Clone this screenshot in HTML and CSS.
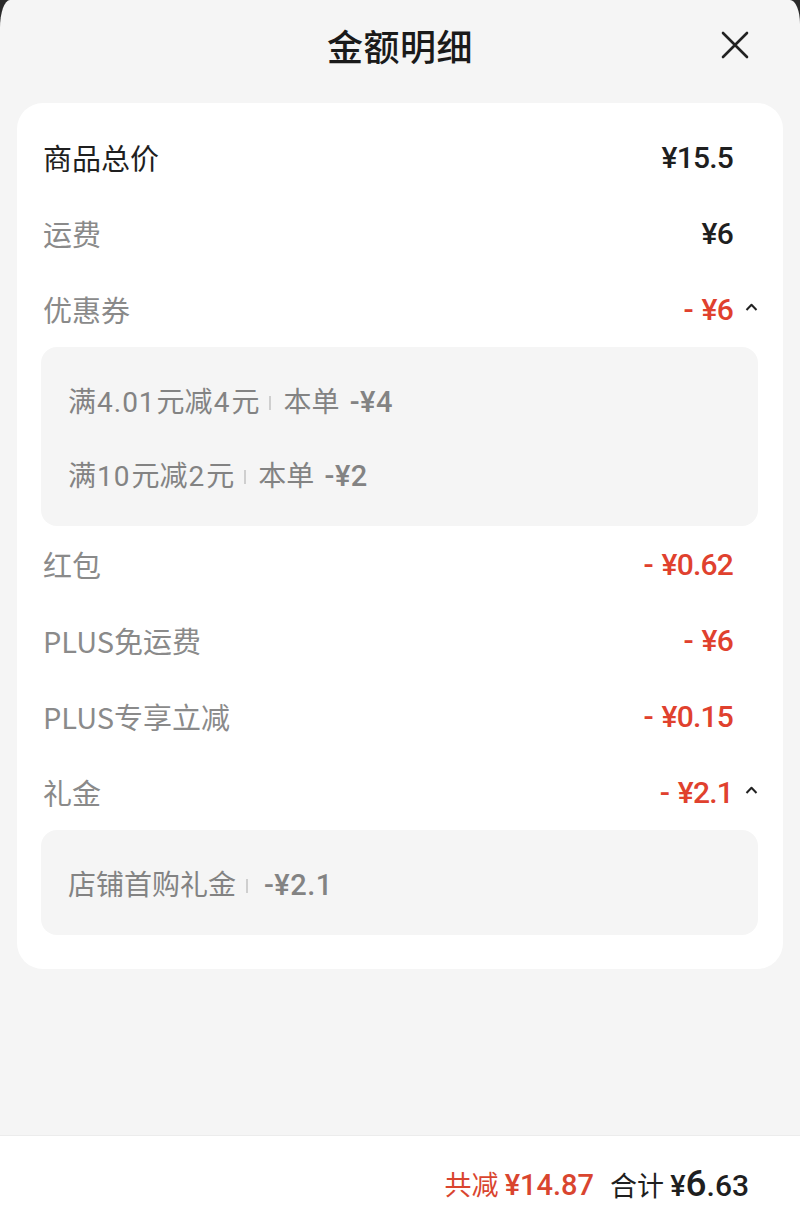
FILE: index.html
```html
<!DOCTYPE html>
<html lang="zh-CN">
<head>
<meta charset="utf-8">
<title>金额明细</title>
<link rel="stylesheet" href="styles.css">
</head>
<body>
<div class="sheet">
  <header class="header">
    <div></div>
    <h1 class="title">金额明细</h1>
    <button class="close" aria-label="关闭">
      <svg width="28" height="28" viewBox="0 0 28 28"><path d="M2 2L26 26M26 2L2 26" stroke="#222" stroke-width="2.6" stroke-linecap="round" fill="none"/></svg>
    </button>
  </header>

  <section class="card">
    <div class="row">
      <span class="label dark">商品总价</span>
      <span class="val">¥15.5</span>
      <span class="caret"></span>
    </div>
    <div class="row">
      <span class="label">运费</span>
      <span class="val">¥6</span>
      <span class="caret"></span>
    </div>
    <div class="row">
      <span class="label">优惠券</span>
      <span class="val red">-&nbsp;¥6</span>
      <span class="caret"><svg width="13" height="8" viewBox="0 0 13 8"><path d="M1.5 7L6.5 1.8L11.5 7" stroke="#222" stroke-width="2" fill="none" stroke-linejoin="round"/></svg></span>
    </div>
    <div class="box">
      <div class="sub">满<span class="num">4.01</span>元减<span class="num">4</span>元<i class="sep"></i>本单&nbsp;<span class="num amt">-¥4</span></div>
      <div class="sub">满<span class="num">10</span>元减<span class="num">2</span>元<i class="sep"></i>本单&nbsp;<span class="num amt">-¥2</span></div>
    </div>
    <div class="row">
      <span class="label">红包</span>
      <span class="val red">-&nbsp;¥0.62</span>
      <span class="caret"></span>
    </div>
    <div class="row">
      <span class="label">PLUS免运费</span>
      <span class="val red">-&nbsp;¥6</span>
      <span class="caret"></span>
    </div>
    <div class="row">
      <span class="label">PLUS专享立减</span>
      <span class="val red">-&nbsp;¥0.15</span>
      <span class="caret"></span>
    </div>
    <div class="row">
      <span class="label">礼金</span>
      <span class="val red">-&nbsp;¥2.1</span>
      <span class="caret"><svg width="13" height="8" viewBox="0 0 13 8"><path d="M1.5 7L6.5 1.8L11.5 7" stroke="#222" stroke-width="2" fill="none" stroke-linejoin="round"/></svg></span>
    </div>
    <div class="box">
      <div class="sub">店铺首购礼金<i class="sep"></i><span class="num amt">-¥2.1</span></div>
    </div>
  </section>

  <div class="spacer"></div>

  <footer class="bar">
    <span class="saved">共减&nbsp;<span class="num">¥14.87</span></span>
    <span class="total">合计&nbsp;<span class="num yen">¥</span><span class="num big">6</span><span class="num cents">.63</span></span>
  </footer>
</div>
</body>
</html>
```

FILE: styles.css
```css
* { box-sizing: border-box; }

html, body {
  margin: 0;
  padding: 0;
  background: #2a2a2a;
}

body {
  font-family: "Noto Sans CJK SC", "Noto Sans", sans-serif;
  color: #1f1f1f;
}

.sheet {
  min-height: 1226px;
  background: #f5f5f5;
  border-top-left-radius: 10px 28px;
  border-top-right-radius: 10px 24px;
  display: flex;
  flex-direction: column;
}

.header {
  height: 90px;
  display: grid;
  grid-template-columns: 1fr auto 1fr;
  align-items: center;
}

.title {
  margin: 0;
  font-size: 36px;
  font-weight: 500;
  color: #1a1a1a;
  letter-spacing: 0.5px;
}

.close {
  justify-self: end;
  margin-right: 51px;
  padding: 0;
  border: 0;
  background: none;
  display: flex;
}

.card {
  margin: 13px 17px 0;
  background: #fff;
  border-radius: 26px;
  padding: 16px 25px 34px 24px;
}

.row {
  height: 76px;
  display: flex;
  align-items: center;
}

.label {
  flex: 1;
  font-size: 29px;
  color: #8a8a8a;
  padding-left: 2px;
}

.label.dark { color: #1f1f1f; }

.val {
  font-family: Roboto, "Noto Sans CJK SC", sans-serif;
  font-size: 30px;
  font-weight: 500;
  letter-spacing: -0.8px;
  color: #1f1f1f;
}

.val.red {
  color: #e0412e;
  word-spacing: 2px;
}

.caret {
  width: 25px;
  display: flex;
  justify-content: flex-end;
  padding-bottom: 4px;
}

.box {
  background: #f5f5f5;
  border-radius: 16px;
  padding: 16px 27px 15px;
}

.sub {
  height: 74px;
  line-height: 74px;
  font-size: 28px;
  color: #838383;
  white-space: nowrap;
}

.num {
  font-family: Roboto, "Noto Sans CJK SC", sans-serif;
}

.sub .num {
  font-weight: 400;
  letter-spacing: 1px;
  margin: 0 1px;
}

.sub .amt {
  font-weight: 500;
  font-size: 29px;
  letter-spacing: 0.5px;
  margin-left: 4px;
}

.sep {
  display: inline-block;
  vertical-align: middle;
  width: 2px;
  height: 14px;
  background: #cfcfcf;
  margin: -2px 12px 0 10px;
}

.spacer { flex: 1; }

.bar {
  height: 91px;
  background: #fff;
  border-top: 1px solid #ececec;
  display: flex;
  justify-content: flex-end;
  align-items: center;
  padding: 4px 51px 0 0;
  font-size: 27px;
}

.saved {
  color: #d9452f;
  margin-right: 16px;
}

.saved .num {
  font-size: 29px;
  font-weight: 500;
}

.total {
  color: #1f1f1f;
  display: flex;
  align-items: baseline;
}

.total .yen {
  font-size: 29px;
  font-weight: 500;
}

.total .big {
  font-size: 37px;
  font-weight: 500;
}

.total .cents {
  font-size: 30px;
  font-weight: 500;
}
```
